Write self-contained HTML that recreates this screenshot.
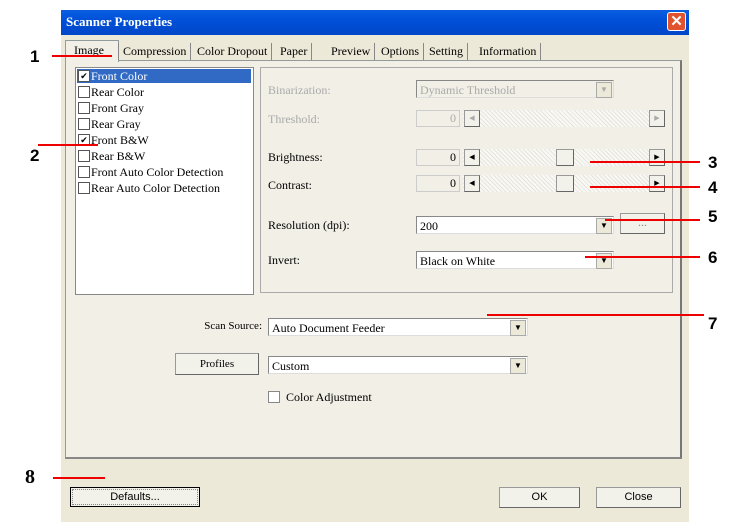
<!DOCTYPE html><html><head><style>
body{margin:0;width:737px;height:529px;background:#fff;position:relative;overflow:hidden;font-family:"Liberation Serif",serif;font-size:12px;color:#000}
.a{position:absolute}
.win{left:61px;top:10px;width:628px;height:512px;background:#ece9d8}
.title{left:61px;top:10px;width:628px;height:25px;background:linear-gradient(#0a5fe0,#0050d8 40%,#0046c8);color:#fff;font-weight:bold;font-size:13px;line-height:24px;text-indent:5px}
.x{left:667px;top:12px;width:19px;height:19px;background:#e0532e;border:1px solid #fff;border-radius:3px;color:#fff;font:bold 15px "Liberation Sans",sans-serif;text-align:center;line-height:18px;box-sizing:border-box}
.panel{left:65px;top:60px;width:614px;height:396px;border:1px solid #919b9c;border-right:2px solid #777;border-bottom:2px solid #888;background:#f1efe6}
.tab{top:43px;height:17px;line-height:16px;border-right:1px solid #888;padding:0 4px}
.box{background:#fff;border:1px solid #7f9db9}
.combo{background:#fff;border:1px solid #888;border-right-color:#ddd;border-bottom-color:#ddd;height:18px;line-height:18px;padding-left:3px;box-sizing:border-box}
.dd{position:absolute;right:1px;top:1px;width:14px;height:14px;background:#ece9d8;border:1px solid #aaa;font-size:8px;text-align:center;line-height:14px}
.btn{background:#f2f1ea;border:1px solid #999;border-right-color:#666;border-bottom-color:#666;text-align:center;box-sizing:border-box}
.red{background:#e00;height:2px}
.num{font:bold 17px "Liberation Sans",sans-serif}
.li{left:78px;height:13px;line-height:13px}
.cb{display:inline-block;width:10px;height:10px;border:1px solid #555;background:#fff;vertical-align:-2px;margin-right:1px;font-size:9px;line-height:10px;text-align:center;overflow:hidden;color:#000;box-sizing:content-box}
.gr{color:#aaa}
.trk{background:repeating-linear-gradient(45deg,#e6e4dc 0 1px,#f8f8f4 1px 3px)}
</style></head><body>
<div class="a win"></div>
<div class="a title">Scanner Properties</div>
<div class="a x">✕</div>
<div class="a panel"></div>
<div class="a" style="left:65px;top:40px;width:52px;height:21px;background:#f1efe6;border:1px solid #919b9c;border-bottom:none"></div>
<div class="a" style="left:74px;top:43px">Image</div>
<div class="a tab" style="left:118px;border-left:1px solid #888">Compression</div>
<div class="a tab" style="left:193px">Color Dropout</div>
<div class="a tab" style="left:276px">Paper</div>
<div class="a tab" style="left:327px">Preview</div>
<div class="a tab" style="left:377px">Options</div>
<div class="a tab" style="left:425px">Setting</div>
<div class="a tab" style="left:475px">Information</div>
<div class="a box" style="left:75px;top:67px;width:177px;height:226px;border-color:#888"></div>
<div class="a" style="left:77px;top:69px;width:174px;height:14px;background:#316ac5"></div>
<div class="a li" style="top:70px;color:#fff"><span class="cb">✔</span>Front Color</div>
<div class="a li" style="top:86px"><span class="cb"></span>Rear Color</div>
<div class="a li" style="top:102px"><span class="cb"></span>Front Gray</div>
<div class="a li" style="top:118px"><span class="cb"></span>Rear Gray</div>
<div class="a li" style="top:134px"><span class="cb">✔</span>Front B&amp;W</div>
<div class="a li" style="top:150px"><span class="cb"></span>Rear B&amp;W</div>
<div class="a li" style="top:166px"><span class="cb"></span>Front Auto Color Detection</div>
<div class="a li" style="top:182px"><span class="cb"></span>Rear Auto Color Detection</div>
<div class="a" style="left:260px;top:67px;width:411px;height:224px;border:1px solid #aaa;background:#f1efe6"></div>
<div class="a gr" style="left:268px;top:83px">Binarization:</div>
<div class="a gr" style="left:268px;top:112px">Threshold:</div>
<div class="a" style="left:268px;top:150px">Brightness:</div>
<div class="a" style="left:268px;top:178px">Contrast:</div>
<div class="a" style="left:268px;top:218px">Resolution (dpi):</div>
<div class="a" style="left:268px;top:253px">Invert:</div>
<div class="a combo gr" style="left:416px;top:80px;width:198px;background:#f1efe6">Dynamic Threshold<div class="dd" style="color:#aaa">▼</div></div>
<div class="a" style="left:416px;top:110px;width:44px;height:17px;border:1px solid #ccc;text-align:right;color:#aaa;padding-right:3px;box-sizing:border-box">0</div>
<div class="a trk" style="left:463px;top:110px;width:202px;height:17px"></div>
<div class="a btn" style="left:464px;top:110px;width:16px;height:17px;font-size:7px;color:#aaa;line-height:15px">◀</div>
<div class="a btn" style="left:649px;top:110px;width:16px;height:17px;font-size:7px;color:#aaa;line-height:15px">▶</div>
<div class="a" style="left:416px;top:149px;width:44px;height:17px;border:1px solid #ccc;text-align:right;padding-right:3px;box-sizing:border-box">0</div>
<div class="a trk" style="left:463px;top:149px;width:202px;height:17px"></div>
<div class="a btn" style="left:464px;top:149px;width:16px;height:17px;font-size:7px;line-height:15px">◀</div>
<div class="a btn" style="left:556px;top:149px;width:18px;height:17px"></div>
<div class="a btn" style="left:649px;top:149px;width:16px;height:17px;font-size:7px;line-height:15px">▶</div>
<div class="a" style="left:416px;top:175px;width:44px;height:17px;border:1px solid #ccc;text-align:right;padding-right:3px;box-sizing:border-box">0</div>
<div class="a trk" style="left:463px;top:175px;width:202px;height:17px"></div>
<div class="a btn" style="left:464px;top:175px;width:16px;height:17px;font-size:7px;line-height:15px">◀</div>
<div class="a btn" style="left:556px;top:175px;width:18px;height:17px"></div>
<div class="a btn" style="left:649px;top:175px;width:16px;height:17px;font-size:7px;line-height:15px">▶</div>
<div class="a combo" style="left:416px;top:216px;width:198px">200<div class="dd">▼</div></div>
<div class="a btn" style="left:620px;top:213px;width:45px;height:21px;color:#888;line-height:17px">...</div>
<div class="a combo" style="left:416px;top:251px;width:198px">Black on White<div class="dd">▼</div></div>
<div class="a" style="left:176px;top:320px;width:86px;text-align:right;font-size:11px">Scan Source:</div>
<div class="a combo" style="left:268px;top:318px;width:260px">Auto Document Feeder<div class="dd">▼</div></div>
<div class="a btn" style="left:175px;top:353px;width:84px;height:22px;line-height:20px;font-size:11px">Profiles</div>
<div class="a combo" style="left:268px;top:356px;width:260px">Custom<div class="dd">▼</div></div>
<div class="a" style="left:268px;top:390px"><span class="cb" style="border-color:#888;margin-right:6px"></span>Color Adjustment</div>
<div class="a btn" style="left:70px;top:487px;width:130px;height:20px;border:1px solid #000;outline:1px dotted #888;outline-offset:-3px;font:11px 'Liberation Sans',sans-serif;line-height:18px">Defaults...</div>
<div class="a btn" style="left:499px;top:487px;width:81px;height:21px;font:11px 'Liberation Sans',sans-serif;line-height:19px">OK</div>
<div class="a btn" style="left:596px;top:487px;width:85px;height:21px;font:11px 'Liberation Sans',sans-serif;line-height:19px">Close</div>
<div class="a red" style="left:52px;top:55px;width:60px"></div>
<div class="a red" style="left:38px;top:144px;width:60px"></div>
<div class="a red" style="left:590px;top:161px;width:110px"></div>
<div class="a red" style="left:590px;top:186px;width:110px"></div>
<div class="a red" style="left:605px;top:219px;width:95px"></div>
<div class="a red" style="left:585px;top:256px;width:115px"></div>
<div class="a red" style="left:487px;top:314px;width:217px"></div>
<div class="a red" style="left:53px;top:477px;width:52px"></div>
<div class="a num" style="left:30px;top:47px">1</div>
<div class="a num" style="left:30px;top:146px">2</div>
<div class="a num" style="left:708px;top:153px">3</div>
<div class="a num" style="left:708px;top:178px">4</div>
<div class="a num" style="left:708px;top:207px">5</div>
<div class="a num" style="left:708px;top:248px">6</div>
<div class="a num" style="left:708px;top:314px">7</div>
<div class="a num" style="left:25px;top:466px;font-family:'Liberation Serif',serif;font-size:20px">8</div>
</body></html>
